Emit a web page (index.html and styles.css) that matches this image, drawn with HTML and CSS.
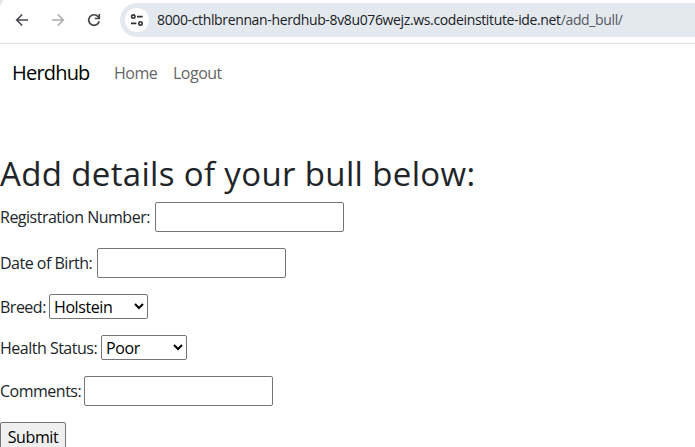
FILE: index.html
```html
<!DOCTYPE html>
<html lang="en">
<head>
<meta charset="utf-8">
<title>Herdhub</title>
<link rel="stylesheet" href="styles.css">
</head>
<body>
<div class="toolbar">
  <svg class="corner" width="6" height="8" viewBox="0 0 6 8"><path d="M0 0H4Q1 2 0 7Z" fill="#dfe3e8"/></svg>
  <svg class="tool" width="16" height="16" viewBox="0 0 16 16" fill="none" stroke="#45484b" stroke-width="1.6"><path d="M14 8H3M8.2 2.5L2.7 8l5.5 5.5"/></svg>
  <svg class="tool" width="16" height="16" viewBox="0 0 16 16" fill="none" stroke="#a9abad" stroke-width="1.6"><path d="M2 8H13M7.8 2.5L13.3 8l-5.5 5.5"/></svg>
  <svg class="tool" width="16" height="16" viewBox="0 0 16 16" fill="none" stroke="#45484b" stroke-width="1.7"><path d="M13.2 9.2A5.3 5.3 0 1 1 12.2 4.8L13.3 6.2M13.3 2V6.5H8.8"/></svg>
  <div class="address">
    <span class="site-info">
      <svg width="14" height="14" viewBox="0 0 14 14" fill="none" stroke="#303336" stroke-width="1.6"><circle cx="3.3" cy="3.6" r="1.7"/><path d="M7 3.6H12.6M1 10.4H6.4"/><circle cx="10.5" cy="10.4" r="1.7"/></svg>
    </span>
    <span class="url">8000-cthlbrennan-herdhub-8v8u076wejz.ws.codeinstitute-ide.net<span class="path">/add_bull/</span></span>
  </div>
</div>
<nav class="navbar">
  <a class="brand">Herdhub</a>
  <a class="link home">Home</a>
  <a class="link">Logout</a>
</nav>
<main>
  <h1>Add details of your bull below:</h1>
  <form>
    <div class="field registration"><label for="reg">Registration Number:</label><input id="reg" type="text"></div>
    <div class="field birth"><label for="dob">Date of Birth:</label><input id="dob" type="text"></div>
    <div class="field breed"><label for="breed">Breed:</label><select id="breed"><option>Holstein</option></select></div>
    <div class="field health"><label for="health">Health Status:</label><select id="health"><option>Poor</option></select></div>
    <div class="field comments"><label for="comments">Comments:</label><input id="comments" type="text"></div>
    <button type="button">Submit</button>
  </form>
</main>
</body>
</html>
```
FILE: styles.css
```css
* { box-sizing: border-box; }
html { overflow: hidden; }
body {
  margin: 0;
  height: 447px;
  overflow: hidden;
  background: #fff;
  color: #212529;
  font: 16px/24px "Open Sans", "Noto Sans", sans-serif;
  letter-spacing: -0.5px;
}
.toolbar {
  position: relative;
  display: flex;
  align-items: center;
  height: 44px;
  padding: 0 0 4px 14px;
  border-bottom: 1px solid #dedfe0;
}
.corner { position: absolute; left: 0; top: 0; }
.tool { flex: none; margin-right: 20px; }
.address {
  flex: 1;
  display: flex;
  align-items: center;
  height: 34px;
  margin: 1px 0 0 -2px;
  padding-left: 5px;
  border-radius: 17px 0 0 17px;
  background: #e4e9f0;
}
.site-info {
  display: flex;
  align-items: center;
  justify-content: center;
  width: 24px;
  height: 24px;
  margin-right: 8px;
  border-radius: 50%;
  background: #fff;
}
.url {
  font-size: 14px;
  letter-spacing: -0.36px;
  white-space: nowrap;
  color: #202124;
}
.path { color: #54585d; }
.navbar {
  display: flex;
  align-items: center;
  height: 58px;
  padding-left: 12px;
}
.brand {
  width: 102px;
  font-size: 20px;
  letter-spacing: -0.8px;
  color: #000;
}
.link { color: #666; }
.home { width: 59px; }
h1 {
  margin: 51px 0 0;
  height: 49px;
  font-size: 33px;
  line-height: 42px;
  font-weight: 400;
  letter-spacing: 0.35px;
  white-space: nowrap;
}
form {
  display: flex;
  flex-direction: column;
  align-items: flex-start;
  gap: 16px;
}
.field { display: flex; align-items: center; }
label { flex: none; white-space: nowrap; }
.registration label { width: 155px; }
.birth label { width: 97px; }
.breed label { width: 49px; }
.health label { width: 101px; }
.comments label { width: 84px; }
input, select, button {
  margin: 0;
  border: 1px solid #767676;
  border-radius: 2px;
  font: inherit;
  letter-spacing: -0.4px;
  color: #000;
}
input { width: 189px; height: 30px; background: #fff; }
select { height: 25px; padding: 0; line-height: 23px; background: #fff; }
.breed select { width: 99px; }
.health select { width: 86px; }
button { width: 66px; height: 30px; padding: 0; background: #efefef; }
```
